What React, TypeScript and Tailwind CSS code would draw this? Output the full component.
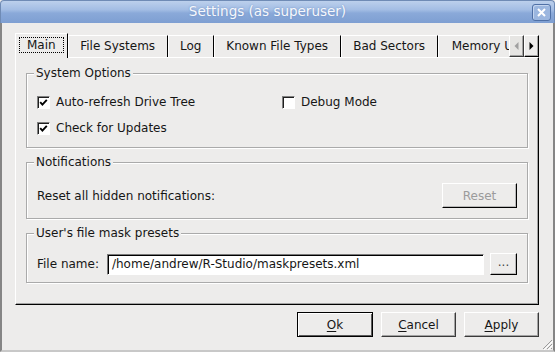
import React from 'react';

const raised =
  'flex items-center justify-center border border-t-white border-l-white border-r-[#3a3a3a] border-b-[#3a3a3a] shadow-[inset_-1px_-1px_0_#a3a3a3]';

const Check = ({ on }: { on?: boolean }) => (
  <span className="flex h-[13px] w-[13px] shrink-0 items-center justify-center border border-t-[#808080] border-l-[#808080] border-b-white border-r-white bg-white shadow-[inset_1px_1px_0_#1e1e1e]">
    {on && (
      <svg width="9" height="9" viewBox="0 0 9 9">
        <path d="M1.2 4.2 L3.4 6.6 L7.8 1.8" fill="none" stroke="#000" strokeWidth="1.9" />
      </svg>
    )}
  </span>
);

const Group = ({ title, children }: { title: string; children: React.ReactNode }) => (
  <fieldset className="border border-[#aaaaaa] shadow-[inset_1px_1px_0_#fff,1px_1px_0_#fff]">
    <legend className="ml-[7px] bg-[#edeceb] px-[2px] leading-[14px]">{title}</legend>
    {children}
  </fieldset>
);

const tabs = [
  { label: 'File Systems', w: 'w-[100px]' },
  { label: 'Log', w: 'w-[46px]' },
  { label: 'Known File Types', w: 'w-[127px]' },
  { label: 'Bad Sectors', w: 'w-[97px]' },
];

export default function App() {
  return (
    <div className="relative flex h-[352px] w-[555px] flex-col overflow-hidden bg-[#edeceb] font-['DejaVu_Sans',sans-serif] text-[12px] text-[#161616]">
      {/* title bar */}
      <div className="flex h-[23px] shrink-0 items-center rounded-t-[4px] border border-b-0 border-[#6f8bb5] bg-[linear-gradient(#bcd0ec,#a3bde4_40%,#8aa9d9_55%,#7e9fd2)]">
        <div className="flex-1 pl-[2px] text-center text-[13.5px] leading-none text-[#f6f8fc] [text-shadow:0_0_2px_#6c8cc0]">
          Settings (as superuser)
        </div>
        <div className="mr-[3px] flex h-[17px] w-[19px] items-center justify-center rounded-[3px] border border-[#4f70a6] bg-[#9bb6df] shadow-[inset_1px_1px_0_#c4d5ef]">
          <svg width="9" height="9" viewBox="0 0 9 9">
            <path d="M1 1 L8 8 M8 1 L1 8" stroke="#fff" strokeWidth="2" />
          </svg>
        </div>
      </div>

      {/* body */}
      <div className="flex flex-1 flex-col border-x-2 border-b-2 border-l-[#858585] border-r-[#858585] border-b-[#c8c8c8] pl-[13px] pr-[14px] pt-[10px]">
        {/* tabs */}
        <div className="flex h-[24px] items-end">
          <div className="relative z-10 -mb-px flex h-[25px] shrink-0 items-start border-l border-t border-white border-r border-r-black bg-[#edeceb] px-[3px] pt-[3px]">
            <span className="border border-dotted border-black px-[7px] leading-[14px]">Main</span>
          </div>
          <div className="flex h-full flex-1 items-end overflow-hidden">
            {tabs.map((t) => (
              <div
                key={t.label}
                className={`${t.w} h-[22px] shrink-0 whitespace-nowrap border-l border-t border-white border-r border-r-black pt-[3px] text-center leading-[14px]`}
              >
                {t.label}
              </div>
            ))}
            <div className="h-[22px] shrink-0 whitespace-nowrap border-l border-t border-white pl-[13px] pt-[3px] leading-[14px]">
              Memory Usage
            </div>
          </div>
          <div className={`${raised} h-[22px] w-[15px] bg-[#e6e5e3]`}>
            <svg width="5" height="8" viewBox="0 0 5 8">
              <path d="M4.5 0 L0.5 4 L4.5 8 Z" fill="#a0a0a0" />
            </svg>
          </div>
          <div className={`${raised} h-[22px] w-[15px] border-r-black border-b-black`}>
            <svg width="5" height="8" viewBox="0 0 5 8">
              <path d="M0.5 0 L4.5 4 L0.5 8 Z" fill="#000" />
            </svg>
          </div>
        </div>

        {/* pane */}
        <div className="flex h-[248px] flex-col gap-[7px] border border-t-white border-l-white border-r-black border-b-black px-[10px] pt-[8px] shadow-[inset_-1px_-1px_0_#a3a3a3]">
          <Group title="System Options">
            <div className="grid grid-cols-[245px_1fr] gap-y-[10px] pb-[11px] pl-[10px] pt-[14px]">
              <label className="flex h-[16px] items-center gap-[6px]">
                <Check on />
                Auto-refresh Drive Tree
              </label>
              <label className="flex h-[16px] items-center gap-[6px]">
                <Check />
                Debug Mode
              </label>
              <label className="flex h-[16px] items-center gap-[6px]">
                <Check on />
                Check for Updates
              </label>
            </div>
          </Group>

          <Group title="Notifications">
            <div className="flex items-center justify-between pb-[10px] pl-[10px] pr-[10px] pt-[14px]">
              <span>Reset all hidden notifications:</span>
              <div className="flex h-[25px] w-[75px] items-center justify-center border border-t-white border-l-white border-r-black border-b-black text-[#9b9b9b] shadow-[inset_-1px_-1px_0_#b8b8b8]">
                Reset
              </div>
            </div>
          </Group>

          <Group title="User's file mask presets">
            <div className="flex items-center pb-[7px] pl-[10px] pr-[10px] pt-[13px]">
              <span className="mr-[8px]">File name:</span>
              <div className="flex h-[21px] flex-1 items-center border border-t-[#7a7a7a] border-l-[#7a7a7a] border-b-white border-r-white bg-white pl-[4px] shadow-[inset_1px_1px_0_#000]">
                /home/andrew/R-Studio/maskpresets.xml
              </div>
              <div className="ml-[6px] flex h-[22px] w-[27px] items-center justify-center border border-t-white border-l-white border-r-black border-b-black pb-[4px] text-[#444] shadow-[inset_-1px_-1px_0_#b8b8b8]">
                ...
              </div>
            </div>
          </Group>
        </div>

        {/* buttons */}
        <div className="mt-[7px] flex justify-end gap-[8px]">
          <div className="flex h-[25px] w-[76px] items-center justify-center border border-black shadow-[inset_1px_1px_0_#fff,inset_-1px_-1px_0_#5a5a5a]">
            <span>
              <u className="underline-offset-2">O</u>k
            </span>
          </div>
          <div className={`${raised} h-[25px] w-[75px]`}>
            <span>
              <u className="underline-offset-2">C</u>ancel
            </span>
          </div>
          <div className={`${raised} h-[25px] w-[75px]`}>
            <span>
              <u className="underline-offset-2">A</u>pply
            </span>
          </div>
        </div>
      </div>

      {/* resize grip */}
      <svg className="absolute bottom-[2px] right-[2px]" width="12" height="12" viewBox="0 0 12 12">
        <path d="M11 2 L2 11 M11 6 L6 11 M11 10 L10 11" stroke="#9a9a9a" strokeWidth="1" />
        <path d="M12 3 L3 12 M12 7 L7 12" stroke="#ffffff" strokeWidth="1" />
      </svg>
    </div>
  );
}
